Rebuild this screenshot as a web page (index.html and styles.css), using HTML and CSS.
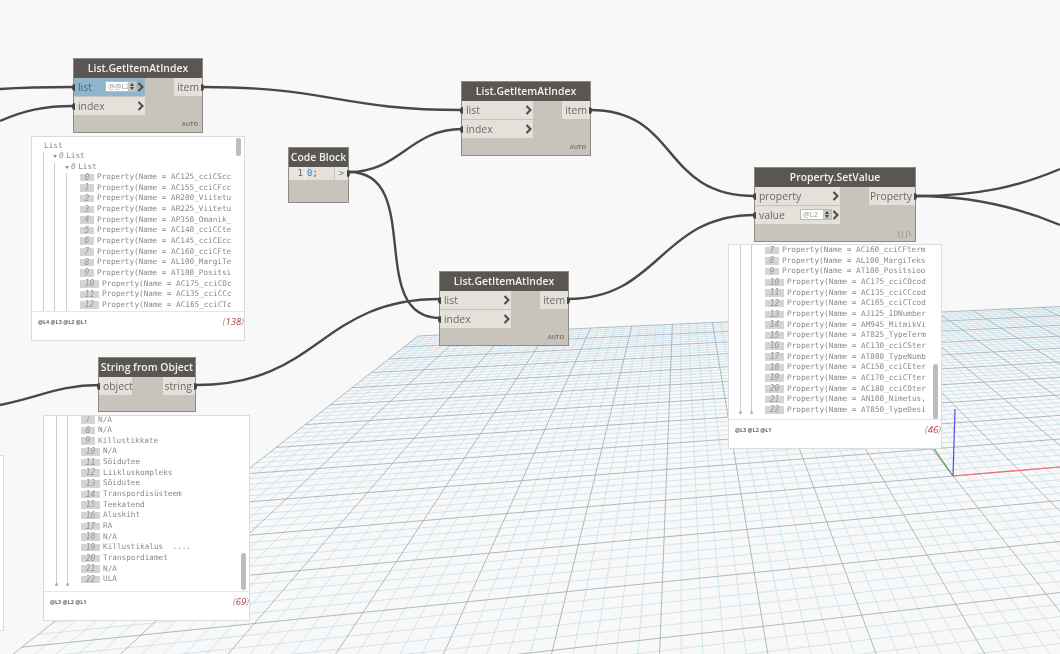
FILE: index.html
```html
<!DOCTYPE html>
<html lang="en">
<head>
<meta charset="utf-8">
<title>Dynamo graph</title>
<link rel="stylesheet" href="styles.css">
</head>
<body>
<main class="canvas">
  <svg class="layer" id="grid" width="1060" height="654" viewBox="0 0 1060 654" aria-hidden="true">
    <g id="grid-minor" class="grid-minor"></g>
    <g id="grid-major" class="grid-major"></g>
    <line class="axis-y" x1="953" y1="476" x2="955" y2="409"/>
    <line class="axis-z" x1="953" y1="476" x2="930" y2="443"/>
    <line class="axis-x" x1="953" y1="476" x2="1060" y2="467"/>
  </svg>
  <div class="stub"></div>
  <svg class="layer" width="1060" height="654" viewBox="0 0 1060 654" aria-hidden="true">
    <g class="wires">
      <path d="M0 89 C30 87 50 87 73 87"/>
      <path d="M0 121 C25 110 45 106 73 106"/>
      <path d="M203 87 C330 87 340 110 462 110"/>
      <path d="M349 172 C400 172 410 129 462 129"/>
      <path d="M349 172 C425 172 365 318 440 318"/>
      <path d="M196 385 C320 385 320 299 440 299"/>
      <path d="M0 405 C40 397 60 385 99 385"/>
      <path d="M568 299 C660 299 660 215 755 215"/>
      <path d="M590 110 C680 110 660 196 755 196"/>
      <path d="M916 196 C980 196 1020 186 1060 169"/>
      <path d="M916 196 C975 196 1020 208 1060 225"/>
    </g>
  </svg>

  <svg class="defs" width="0" height="0" aria-hidden="true">
    <symbol id="chev" viewBox="0 0 7 10"><path d="M1.5 1 L5.5 5 L1.5 9" fill="none" stroke="#4a4a4a" stroke-width="2"/></symbol>
  </svg>

  <section class="node n-get1">
    <div class="head">List.GetItemAtIndex</div>
    <div class="ports">
      <div class="inputs w71">
        <div class="port in active"><span class="name">list</span>
          <span class="level"><span class="level-text">@@L2</span><span class="spin"></span></span>
          <svg class="chev"><use href="#chev"/></svg></div>
        <div class="port in"><span class="name">index</span><svg class="chev"><use href="#chev"/></svg></div>
      </div>
      <div class="outputs"><div class="port out w28"><span class="name">item</span></div></div>
    </div>
    <div class="lacing">AUTO</div>
  </section>

  <section class="node n-get2">
    <div class="head">List.GetItemAtIndex</div>
    <div class="ports">
      <div class="inputs w71">
        <div class="port in"><span class="name">list</span><svg class="chev"><use href="#chev"/></svg></div>
        <div class="port in"><span class="name">index</span><svg class="chev"><use href="#chev"/></svg></div>
      </div>
      <div class="outputs"><div class="port out w28"><span class="name">item</span></div></div>
    </div>
    <div class="lacing">AUTO</div>
  </section>

  <section class="node n-get3">
    <div class="head">List.GetItemAtIndex</div>
    <div class="ports">
      <div class="inputs w71">
        <div class="port in"><span class="name">list</span><svg class="chev"><use href="#chev"/></svg></div>
        <div class="port in"><span class="name">index</span><svg class="chev"><use href="#chev"/></svg></div>
      </div>
      <div class="outputs"><div class="port out w28"><span class="name">item</span></div></div>
    </div>
    <div class="lacing">AUTO</div>
  </section>

  <section class="node n-code">
    <div class="head">Code Block</div>
    <div class="code-row">
      <span class="gutter">1</span>
      <span class="code"><span class="num">0</span>;</span>
      <span class="code-out">&gt;</span>
    </div>
  </section>

  <section class="node n-set">
    <div class="head">Property.SetValue</div>
    <div class="ports">
      <div class="inputs w85">
        <div class="port in"><span class="name">property</span><svg class="chev"><use href="#chev"/></svg></div>
        <div class="port in"><span class="name">value</span>
          <span class="level"><span class="level-text">@L2</span><span class="spin"></span></span>
          <svg class="chev"><use href="#chev"/></svg></div>
      </div>
      <div class="outputs"><div class="port out w46"><span class="name">Property</span></div></div>
    </div>
    <div class="lacing cross">|||\</div>
  </section>

  <section class="node n-str">
    <div class="head">String from Object</div>
    <div class="ports">
      <div class="inputs w33"><div class="port in"><span class="name">object</span></div></div>
      <div class="outputs"><div class="port out w32"><span class="name">string</span></div></div>
    </div>
  </section>

  <section class="watch w-one">
    <div class="list">
      <i class="tree t1"></i><i class="tree t2"></i><i class="tree t3"></i>
      <div class="row head-row l0"><span>List</span></div>
      <div class="row head-row l1"><b class="tri"></b><em>0</em><span>List</span></div>
      <div class="row head-row l2"><b class="tri"></b><em>0</em><span>List</span></div>
      <div class="row"><span class="idx">0</span><span class="val">Property(Name = AC125_cciCScc</span></div>
      <div class="row"><span class="idx">1</span><span class="val">Property(Name = AC155_cciCFcc</span></div>
      <div class="row"><span class="idx">2</span><span class="val">Property(Name = AR200_Viitetu</span></div>
      <div class="row"><span class="idx">3</span><span class="val">Property(Name = AR225_Viitetu</span></div>
      <div class="row"><span class="idx">4</span><span class="val">Property(Name = AP350_Omanik_</span></div>
      <div class="row"><span class="idx">5</span><span class="val">Property(Name = AC140_cciCCte</span></div>
      <div class="row"><span class="idx">6</span><span class="val">Property(Name = AC145_cciCEcc</span></div>
      <div class="row"><span class="idx">7</span><span class="val">Property(Name = AC160_cciCFte</span></div>
      <div class="row"><span class="idx">8</span><span class="val">Property(Name = AL100_MargiTe</span></div>
      <div class="row"><span class="idx">9</span><span class="val">Property(Name = AT100_Positsi</span></div>
      <div class="row"><span class="idx wide">10</span><span class="val">Property(Name = AC175_cciCOc</span></div>
      <div class="row"><span class="idx wide">11</span><span class="val">Property(Name = AC135_cciCCc</span></div>
      <div class="row"><span class="idx wide">12</span><span class="val">Property(Name = AC165_cciCTc</span></div>
      <i class="thumb"></i>
    </div>
    <div class="foot"><span class="levels">@L4 @L3 @L2 @L1</span><span class="count"><s>(</s>138<s>)</s></span></div>
  </section>

  <section class="watch w-two">
    <div class="list">
      <i class="tree t1"><u></u></i><i class="tree t2"><u></u></i>
      <div class="row"><span class="idx">7</span><span class="val">Property(Name = AC160_cciCFterm</span></div>
      <div class="row"><span class="idx">8</span><span class="val">Property(Name = AL100_MargiTeks</span></div>
      <div class="row"><span class="idx">9</span><span class="val">Property(Name = AT100_Positsioo</span></div>
      <div class="row"><span class="idx wide">10</span><span class="val">Property(Name = AC175_cciCOcod</span></div>
      <div class="row"><span class="idx wide">11</span><span class="val">Property(Name = AC135_cciCCcod</span></div>
      <div class="row"><span class="idx wide">12</span><span class="val">Property(Name = AC165_cciCTcod</span></div>
      <div class="row"><span class="idx wide">13</span><span class="val">Property(Name = AJ125_IDNumber</span></div>
      <div class="row"><span class="idx wide">14</span><span class="val">Property(Name = AM945_MitmikVi</span></div>
      <div class="row"><span class="idx wide">15</span><span class="val">Property(Name = AT825_TypeTerm</span></div>
      <div class="row"><span class="idx wide">16</span><span class="val">Property(Name = AC130_cciCSter</span></div>
      <div class="row"><span class="idx wide">17</span><span class="val">Property(Name = AT800_TypeNumb</span></div>
      <div class="row"><span class="idx wide">18</span><span class="val">Property(Name = AC150_cciCEter</span></div>
      <div class="row"><span class="idx wide">19</span><span class="val">Property(Name = AC170_cciCTter</span></div>
      <div class="row"><span class="idx wide">20</span><span class="val">Property(Name = AC180_cciCOter</span></div>
      <div class="row"><span class="idx wide">21</span><span class="val">Property(Name = AN100_Nimetus,</span></div>
      <div class="row"><span class="idx wide">22</span><span class="val">Property(Name = AT850_TypeDesi</span></div>
      <i class="thumb"></i>
    </div>
    <div class="foot"><span class="levels">@L3 @L2 @L1</span><span class="count"><s>(</s>46<s>)</s></span></div>
  </section>

  <section class="watch w-three">
    <div class="list">
      <i class="tree t1"><u></u></i><i class="tree t2"><u></u></i>
      <div class="row"><span class="idx">7</span><span class="val">N/A</span></div>
      <div class="row"><span class="idx">8</span><span class="val">N/A</span></div>
      <div class="row"><span class="idx">9</span><span class="val">Killustikkate</span></div>
      <div class="row"><span class="idx wide">10</span><span class="val">N/A</span></div>
      <div class="row"><span class="idx wide">11</span><span class="val">Sõidutee</span></div>
      <div class="row"><span class="idx wide">12</span><span class="val">Liikluskompleks</span></div>
      <div class="row"><span class="idx wide">13</span><span class="val">Sõidutee</span></div>
      <div class="row"><span class="idx wide">14</span><span class="val">Transpordisüsteem</span></div>
      <div class="row"><span class="idx wide">15</span><span class="val">Teekatend</span></div>
      <div class="row"><span class="idx wide">16</span><span class="val">Aluskiht</span></div>
      <div class="row"><span class="idx wide">17</span><span class="val">RA</span></div>
      <div class="row"><span class="idx wide">18</span><span class="val">N/A</span></div>
      <div class="row"><span class="idx wide">19</span><span class="val">Killustikalus  ....</span></div>
      <div class="row"><span class="idx wide">20</span><span class="val">Transpordiamet</span></div>
      <div class="row"><span class="idx wide">21</span><span class="val">N/A</span></div>
      <div class="row"><span class="idx wide">22</span><span class="val">ULA</span></div>
      <i class="thumb"></i>
    </div>
    <div class="foot"><span class="levels">@L3 @L2 @L1</span><span class="count"><s>(</s>69<s>)</s></span></div>
  </section>
</main>
<script src="grid.js"></script>
</body>
</html>
```
FILE: styles.css
```css
* { box-sizing: border-box; }
html, body { margin: 0; padding: 0; }
body { width: 1060px; height: 654px; overflow: hidden; background: #f8f8f8; }
.canvas { position: relative; width: 1060px; height: 654px; overflow: hidden; background: #f8f8f8; filter: blur(.3px); font-family: "Open Sans", "Liberation Sans", sans-serif; }
.layer { position: absolute; left: 0; top: 0; }
.defs { position: absolute; }

.grid-minor line { stroke: #c5deea; stroke-width: .75; }
.grid-major line { stroke: #a0aeb5; stroke-width: .85; }
.axis-x { stroke: #f26a6a; stroke-width: 1.2; }
.axis-y { stroke: #4f4fe8; stroke-width: 1.2; }
.axis-z { stroke: #4e9e4e; stroke-width: 1.2; }

.wires path { fill: none; stroke: #484848; stroke-width: 2.4; }

.stub { position: absolute; left: 0; top: 455px; width: 3.5px; height: 176px; background: #fff; border: 1px solid #ddd; border-left: 0; }

/* nodes */
.node { position: absolute; display: flex; flex-direction: column; background: #c8c4bc; border: 1px solid #8f8b84; }
.n-get1 { left: 73px; top: 58px; width: 130px; height: 75px; }
.n-get2 { left: 461px; top: 81px; width: 130px; height: 75px; }
.n-get3 { left: 439px; top: 271px; width: 130px; height: 75px; }
.n-code { left: 288px; top: 147px; width: 61px; height: 56px; }
.n-set { left: 754px; top: 167px; width: 162px; height: 75px; }
.n-str { left: 98px; top: 357px; width: 98px; height: 55px; }

.head { flex: none; height: 18.5px; background: #5a5652; color: #f2f2f2; font-size: 10.4px; font-stretch: 88%; font-weight: 600; line-height: 18px; text-align: center; white-space: nowrap; }
.ports { display: flex; justify-content: space-between; padding-top: .5px; }
.inputs { display: flex; flex-direction: column; gap: 1px; }
.w71 { width: 71px; }
.w85 { width: 85px; }
.w33 { width: 33px; }
.w28 { width: 28px; }
.w46 { width: 46px; }
.w32 { width: 32px; }
.port { position: relative; display: flex; align-items: center; height: 18px; padding-bottom: 1px; background: #e4e1db; color: #6a6a6a; font-size: 10.4px; font-stretch: 88%; }
.port.in { padding-left: 4px; }
.port.out { justify-content: flex-end; padding-right: 3px; }
.port.active { background: #8fb5cd; color: #55616a; }
.port.in::before, .port.out::after { content: ""; position: absolute; top: 6px; width: 3px; height: 7px; background: #444; }
.port.in::before { left: -2px; border-radius: 3px 0 0 3px; }
.port.out::after { right: -2px; border-radius: 0 3px 3px 0; }
.name { flex: none; }
.chev { flex: none; width: 7px; height: 10px; margin-left: auto; margin-right: 1px; }
.level { flex: none; display: flex; align-items: stretch; height: 11px; margin-left: auto; margin-right: -6px; background: #fff; border: 1px solid #bdbab4; }
.level + .chev { margin-left: 6px; }
.level-text { padding-left: 2px; width: 22px; font-size: 7.5px; font-stretch: 100%; line-height: 9px; color: #9a9a9a; white-space: nowrap; }
.spin { position: relative; width: 8px; background: #c9c6c0; }
.spin::before, .spin::after { content: ""; position: absolute; left: 1.5px; border-left: 2.5px solid transparent; border-right: 2.5px solid transparent; }
.spin::before { top: 1px; border-bottom: 3px solid #444; }
.spin::after { bottom: 1px; border-top: 3px solid #444; }
.lacing { margin-top: auto; padding: 0 4px 3px 0; text-align: right; color: #77736d; font-size: 5.8px; font-weight: 700; line-height: 9px; }
.lacing.cross { font-size: 7px; font-weight: 400; letter-spacing: 0; }

.code-row { display: flex; height: 13px; color: #555; font-family: "DejaVu Sans Mono", monospace; font-size: 9px; line-height: 13px; background: #e4e1db; }
.gutter { width: 16px; padding-right: 2px; text-align: right; color: #666; background: #e8e6e1; }
.code { flex: 1; padding-left: 1px; background: #e4e1db; border-left: 1px solid #f4f2ee; }
.num { color: #3b86e0; }
.code-out { position: relative; width: 14px; text-align: center; color: #777; background: #e8e6e1; border-left: 1px solid #c8c4bc; }
.code-out::after { content: ""; position: absolute; top: 3px; right: -2px; width: 3px; height: 7px; border-radius: 0 3px 3px 0; background: #444; }

/* watch panels */
.watch { position: absolute; display: flex; flex-direction: column; background: #fff; border: 1px solid #dcdcdc; }
.w-one { left: 31px; top: 136px; width: 214px; height: 205px; }
.w-two { left: 728px; top: 244px; width: 214px; height: 205px; }
.w-three { left: 43px; top: 415px; width: 207px; height: 206px; }
.list { position: relative; flex: 1; min-height: 0; overflow: hidden; color: #8a8a8a; font-family: "DejaVu Sans Mono", monospace; font-size: 7.7px; }
.w-one .list { padding-top: 3px; padding-left: 48px; }
.w-two .list { padding-left: 36px; }
.w-three .list { padding-left: 37px; }
.w-three .row:first-of-type { margin-top: -1.5px; }
.row { display: flex; align-items: center; gap: 3px; height: 10.67px; white-space: pre; }
.idx { flex: none; width: 14px; height: 7.5px; background: #d4d4d4; color: #999; font-style: italic; font-size: 8px; line-height: 8px; text-align: center; }
.idx.wide { width: 19px; }
.val { line-height: 10.67px; }
.head-row { gap: 0; }
.l0 { margin-left: -36px; }
.l1 { margin-left: -27px; }
.l2 { margin-left: -15px; }
.head-row em { margin-right: 2.5px; font-style: italic; }
.tri { width: 0; height: 0; margin: 1px 2px 0 0; border-left: 2.5px solid transparent; border-right: 2.5px solid transparent; border-top: 3px solid #5b9fd6; }
.tree { position: absolute; bottom: 0; width: 1.4px; background: #cdcdcd; }
.tree u { position: absolute; bottom: -2px; left: -1px; width: 3.4px; height: 3.4px; border-radius: 50%; background: #b0b0b0; }
.w-one .t1 { left: 11px; top: 15px; }
.w-one .t2 { left: 22px; top: 26px; }
.w-one .t3 { left: 34px; top: 36px; }
.w-two .t1, .w-two .t2 { top: 0; bottom: 7px; }
.w-two .t1 { left: 11px; }
.w-two .t2 { left: 22px; }
.w-three .t1, .w-three .t2 { top: 0; bottom: 7px; }
.w-three .t1 { left: 12px; }
.w-three .t2 { left: 23px; }
.thumb { position: absolute; right: 3px; width: 5px; border-radius: 2px; background: #bdbdbd; }
.w-one .thumb { top: 1px; height: 18px; }
.w-two .thumb { top: 119px; height: 55px; }
.w-three .thumb { top: 137px; height: 37px; }
.foot { flex: none; display: flex; justify-content: space-between; height: 29px; padding: 4px 0 0 6px; border-top: 1px solid #e6e6e6; }
.levels { color: #666; font-size: 5.5px; font-weight: 700; line-height: 12px; }
.count { color: #b04040; font-size: 9.5px; font-style: italic; line-height: 12px; }
.count s { color: #999; text-decoration: none; }
```
FILE: grid.js
```js
(function () {
  var O = [953, 476], V1 = [5245, 115], V2 = [680, 130];
  var S = 0.1569, T = 0.848, N = 50;
  var NS = "http://www.w3.org/2000/svg";
  var minor = document.getElementById("grid-minor");
  var major = document.getElementById("grid-major");

  function project(s, t) {
    var w = 1 + s + t;
    return [(O[0] + s * V1[0] + t * V2[0]) / w, (O[1] + s * V1[1] + t * V2[1]) / w];
  }
  function add(a, b, isMajor) {
    var l = document.createElementNS(NS, "line");
    l.setAttribute("x1", a[0].toFixed(1));
    l.setAttribute("y1", a[1].toFixed(1));
    l.setAttribute("x2", b[0].toFixed(1));
    l.setAttribute("y2", b[1].toFixed(1));
    (isMajor ? major : minor).appendChild(l);
  }
  for (var i = -N; i <= N; i++) {
    var s = i * S / N;
    add(project(s, T), project(s, Math.max(-T, 0.06 - 1 - s)), i % 5 === 0);
    var t = i * T / N;
    var lo = Math.max(-S, 0.06 - 1 - t);
    if (lo < S) add(project(lo, t), project(S, t), i % 5 === 0);
  }
})();
```
